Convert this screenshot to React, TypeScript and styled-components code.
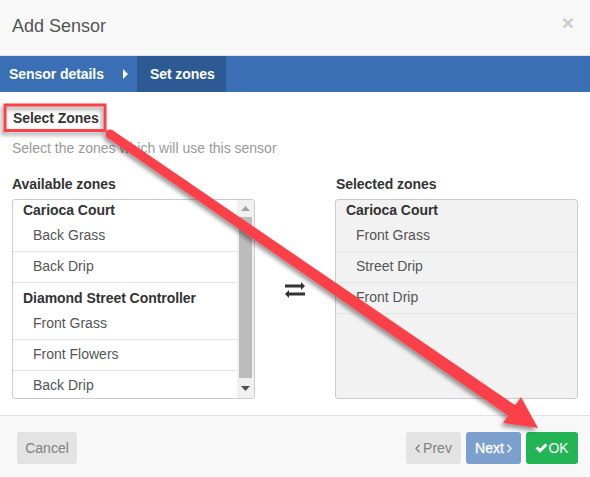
import React from "react";
import styled, { createGlobalStyle } from "styled-components";

const Global = createGlobalStyle`
  html, body { margin: 0; padding: 0; background: #fff; }
  body { font-family: "Liberation Sans", Arial, sans-serif; font-size: 14px; color: #555; }
  * { box-sizing: border-box; }
`;

const Modal = styled.div`
  position: relative;
  width: 590px;
  height: 477px;
  display: flex;
  flex-direction: column;
  overflow: hidden;
  background: #fff;
`;

const Header = styled.header`
  height: 56px;
  flex: none;
  display: flex;
  align-items: flex-start;
  justify-content: space-between;
  padding: 16px 16px 0 12px;
  background: #f8f8f8;
  border-bottom: 1px solid #e3e3e3;
`;

const Title = styled.h4`
  margin: 0;
  font-size: 18px;
  line-height: 20px;
  font-weight: 400;
  color: #555;
`;

const Close = styled.span`
  font-size: 21px;
  line-height: 13px;
  font-weight: 700;
  color: #ccc;
`;

const Steps = styled.nav`
  height: 36px;
  flex: none;
  display: flex;
  align-items: stretch;
  background: #3a6eb5;
`;

const Step = styled.div<{ $active?: boolean }>`
  display: flex;
  align-items: center;
  font-size: 14px;
  font-weight: 700;
  letter-spacing: -0.06px;
  color: #fff;
  width: ${(p) => (p.$active ? "89px" : "auto")};
  padding: ${(p) => (p.$active ? "0 0 0 13px" : "0 0 0 9px")};
  background: ${(p) => (p.$active ? "#2d5a92" : "transparent")};
`;

const Caret = styled.svg`
  width: 5px;
  height: 10px;
  margin: 0 9px 0 19px;
  align-self: center;
`;

const Body = styled.main`
  flex: 1;
  padding: 16px 12px 0;
`;

const Heading = styled.h5`
  margin: 0 0 0 1px;
  font-size: 14px;
  line-height: 20px;
  font-weight: 700;
  letter-spacing: -0.05px;
  color: #333;
`;

const Hint = styled.p`
  margin: 10px 0 0;
  font-size: 14px;
  line-height: 20px;
  color: #999;
`;

const Columns = styled.div`
  display: grid;
  grid-template-columns: 243px 80px 243px;
  margin-top: 16px;
`;

const Column = styled.section`
  display: flex;
  flex-direction: column;
`;

const Label = styled.div<{ $indent?: number }>`
  font-size: 14px;
  line-height: 20px;
  font-weight: 700;
  letter-spacing: -0.05px;
  color: #333;
  margin: 0 0 5px ${(p) => p.$indent ?? 0}px;
`;

const ListBox = styled.div<{ $muted?: boolean }>`
  height: 200px;
  display: flex;
  overflow: hidden;
  border: 1px solid #ccc;
  border-radius: 3px;
  background: ${(p) => (p.$muted ? "#f2f2f2" : "#fff")};
`;

const ListItems = styled.div`
  flex: 1;
  min-width: 0;
`;

const Group = styled.div`
  padding: 5px 10px 0;
  height: 26px;
  font-weight: 700;
  line-height: 20px;
  letter-spacing: -0.05px;
  color: #333;
  &:first-child {
    padding-top: 0;
    height: 21px;
  }
`;

const Item = styled.div`
  height: 31px;
  padding: 0 20px;
  line-height: 28px;
  color: #555;
  border-bottom: 1px solid #e6e6e6;
`;

const Scrollbar = styled.div`
  width: 17px;
  flex: none;
  display: flex;
  flex-direction: column;
  align-items: center;
  background: #f1f1f1;
`;

const ScrollButton = styled.div<{ $h: number }>`
  height: ${(p) => p.$h}px;
  flex: none;
  display: flex;
  align-items: center;
  justify-content: center;
`;

const ScrollThumb = styled.div`
  width: 13px;
  flex: 1;
  background: #bcbcbc;
`;

const Swap = styled.div`
  display: flex;
  align-items: center;
  justify-content: center;
  padding-top: 6px;
  color: #333;
`;

const Footer = styled.footer`
  height: 62px;
  flex: none;
  display: flex;
  justify-content: space-between;
  padding: 16px 12px 0 17px;
  background: #f8f8f8;
  border-top: 1px solid #e3e3e3;
`;

const ButtonGroup = styled.div`
  display: flex;
  gap: 5px;
`;

const Button = styled.button<{ $bg: string; $fg: string; $w: number; $gap?: number }>`
  width: ${(p) => p.$w}px;
  height: 32px;
  display: flex;
  align-items: center;
  justify-content: center;
  gap: ${(p) => p.$gap ?? 0}px;
  padding: 0;
  border: 0;
  border-radius: 3px;
  font-family: inherit;
  font-size: 14px;
  background: ${(p) => p.$bg};
  color: ${(p) => p.$fg};
`;

const NextButton = styled(Button)`
  -webkit-text-stroke: 0.3px #fff;
`;

const Annotation = styled.svg`
  position: absolute;
  inset: 0;
  pointer-events: none;
`;

const Chevron = ({ color, left }: { color: string; left?: boolean }) => (
  <svg width="5" height="9" viewBox="0 0 5 9">
    <path d={left ? "M4.5 .7L1 4.5l3.5 3.8" : "M.5 .7L4 4.5.5 8.3"} fill="none" stroke={color} strokeWidth="1.3" />
  </svg>
);

const Arrow = ({ up, color }: { up?: boolean; color: string }) => (
  <svg width="9" height="5" viewBox="0 0 9 5">
    <path d={up ? "M0 5L4.5 0 9 5z" : "M0 0l4.5 5L9 0z"} fill={color} />
  </svg>
);

export default function App() {
  return (
    <Modal>
      <Global />
      <Header>
        <Title>Add Sensor</Title>
        <Close>×</Close>
      </Header>
      <Steps>
        <Step>Sensor details</Step>
        <Caret viewBox="0 0 5 10">
          <path d="M0 0l5 5-5 5z" fill="#fff" />
        </Caret>
        <Step $active>Set zones</Step>
      </Steps>
      <Body>
        <Heading>Select Zones</Heading>
        <Hint>Select the zones which will use this sensor</Hint>
        <Columns>
          <Column>
            <Label>Available zones</Label>
            <ListBox>
              <ListItems>
                <Group>Carioca Court</Group>
                <Item>Back Grass</Item>
                <Item>Back Drip</Item>
                <Group>Diamond Street Controller</Group>
                <Item>Front Grass</Item>
                <Item>Front Flowers</Item>
                <Item>Back Drip</Item>
              </ListItems>
              <Scrollbar>
                <ScrollButton $h={17}><Arrow up color="#a3a3a3" /></ScrollButton>
                <ScrollThumb />
                <ScrollButton $h={20}><Arrow color="#505050" /></ScrollButton>
              </Scrollbar>
            </ListBox>
          </Column>
          <Swap>
            <svg width="20" height="16" viewBox="0 0 20 16">
              <path d="M0 2.5h16V0l4 4-4 4V5.5H0z" fill="#333" />
              <path d="M20 10.5H4V8l-4 4 4 4v-2.5h16z" fill="#333" />
            </svg>
          </Swap>
          <Column>
            <Label $indent={1}>Selected zones</Label>
            <ListBox $muted>
              <ListItems>
                <Group>Carioca Court</Group>
                <Item>Front Grass</Item>
                <Item>Street Drip</Item>
                <Item>Front Drip</Item>
              </ListItems>
            </ListBox>
          </Column>
        </Columns>
      </Body>
      <Footer>
        <Button $bg="#e3e3e3" $fg="#808080" $w={60}>Cancel</Button>
        <ButtonGroup>
          <Button $bg="#e3e3e3" $fg="#808080" $w={55} $gap={3}>
            <Chevron left color="#808080" />
            Prev
          </Button>
          <NextButton $bg="#7d9fcd" $fg="#fff" $w={55} $gap={3}>
            Next
            <Chevron color="#fff" />
          </NextButton>
          <Button $bg="#22b455" $fg="#fff" $w={52}>
            <svg width="13" height="11" viewBox="0 0 13 11">
              <path d="M1 5.5l1.8-1.8L5 6l5.2-5.2L12 2.6 5 9.6z" fill="#fff" stroke="#fff" strokeWidth=".6" />
            </svg>
            OK
          </Button>
        </ButtonGroup>
      </Footer>
      <Annotation width="590" height="477" viewBox="0 0 590 477">
        <defs>
          <filter id="shadow" x="-10%" y="-10%" width="120%" height="120%">
            <feDropShadow dx="-2" dy="3" stdDeviation="2" floodColor="#000" floodOpacity=".4" />
          </filter>
        </defs>
        <g filter="url(#shadow)">
          <rect x="5" y="105" width="100" height="25.5" fill="none" stroke="#fb4048" strokeWidth="3" />
          <circle cx="110" cy="134" r="4.5" fill="#fb4048" />
          <path d="M112.6 130.3L517 406.5 510 417 107.4 137.7z" fill="#fb4048" />
          <path d="M521 397L503 423 538 428z" fill="#fb4048" />
        </g>
      </Annotation>
    </Modal>
  );
}
